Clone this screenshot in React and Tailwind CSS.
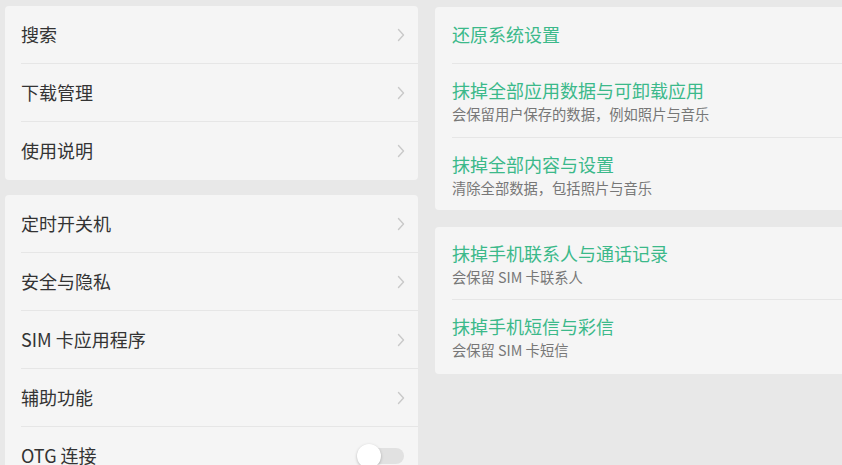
import React from "react";

const font = { fontFamily: '"Noto Sans CJK SC", "Noto Sans", sans-serif' };

function Chevron() {
  return (
    <svg width="8" height="14" viewBox="0 0 8 14" className="mr-[13px]">
      <polyline points="1.5,1.5 6.5,7 1.5,12.5" fill="none" stroke="#c9c9c9" strokeWidth="1.4" strokeLinecap="round" strokeLinejoin="round" />
    </svg>
  );
}

function Toggle() {
  return (
    <div className="relative w-[48px] h-[26px] mr-[13px] flex items-center">
      <div className="absolute left-[9px] w-[38px] h-[16px] rounded-full bg-[#e1e1e1]" />
      <div className="absolute left-0 w-[24px] h-[24px] rounded-full bg-white shadow-[0_1px_3px_rgba(0,0,0,0.25)]" />
    </div>
  );
}

function LeftRow({ label, last, toggle }) {
  return (
    <div className="h-[58px] pl-[16px]">
      <div className={`h-full flex items-center justify-between ${last ? "" : "border-b border-[#e6e6e6]"}`}>
        <span className="text-[18px] leading-[24px] text-[#333333] pb-[2px]">{label}</span>
        {toggle ? <Toggle /> : <Chevron />}
      </div>
    </div>
  );
}

function RightRow({ title, sub, h, last }) {
  return (
    <div className="pl-[17px]" style={{ height: h }}>
      <div className={`h-full ${sub ? "pt-[14px]" : "flex items-center pb-[2px]"} ${last ? "" : "border-b border-[#e6e6e6]"}`}>
        <div className="text-[18px] leading-[24px] text-[#3bb98a]">{title}</div>
        {sub && <div className="mt-[1px] text-[14.3px] leading-[22px] text-[#777777]">{sub}</div>}
      </div>
    </div>
  );
}

export default function App() {
  return (
    <div className="w-[842px] h-[465px] bg-[#e8e8e8] overflow-hidden flex" style={font}>
      <div className="pl-[5px] pt-[6px] w-[418px] shrink-0 flex flex-col">
        <div className="bg-[#f5f5f5] rounded-[4px]">
          <LeftRow label="搜索" />
          <LeftRow label="下载管理" />
          <LeftRow label="使用说明" last />
        </div>
        <div className="bg-[#f5f5f5] rounded-[4px] mt-[15px]">
          <LeftRow label="定时开关机" />
          <LeftRow label="安全与隐私" />
          <LeftRow label="SIM 卡应用程序" />
          <LeftRow label="辅助功能" />
          <LeftRow label="OTG 连接" toggle last />
        </div>
      </div>
      <div className="ml-[17px] pt-[7px] w-[430px] shrink-0 flex flex-col">
        <div className="bg-[#f5f5f5] rounded-[4px]">
          <RightRow title="还原系统设置" h={57} />
          <RightRow title="抹掉全部应用数据与可卸载应用" sub="会保留用户保存的数据，例如照片与音乐" h={74} />
          <RightRow title="抹掉全部内容与设置" sub="清除全部数据，包括照片与音乐" h={72} last />
        </div>
        <div className="bg-[#f5f5f5] rounded-[4px] mt-[17px]">
          <RightRow title="抹掉手机联系人与通话记录" sub="会保留 SIM 卡联系人" h={73} />
          <RightRow title="抹掉手机短信与彩信" sub="会保留 SIM 卡短信" h={74} last />
        </div>
      </div>
    </div>
  );
}
